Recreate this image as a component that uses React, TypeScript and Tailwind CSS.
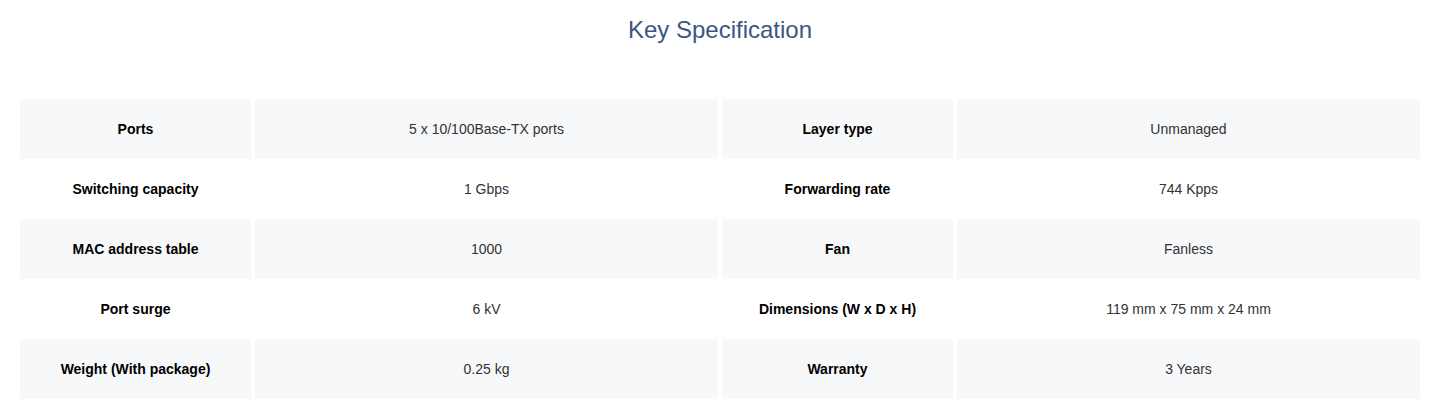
const specs: [string, string, string, string][] = [
	["Ports", "5 x 10/100Base-TX ports", "Layer type", "Unmanaged"],
	["Switching capacity", "1 Gbps", "Forwarding rate", "744 Kpps"],
	["MAC address table", "1000", "Fan", "Fanless"],
	["Port surge", "6 kV", "Dimensions (W x D x H)", "119 mm x 75 mm x 24 mm"],
	["Weight (With package)", "0.25 kg", "Warranty", "3 Years"],
];

export default function App() {
	return (
		<div className="bg-white font-['Liberation_Sans',Arial,sans-serif] pl-5 pr-[19px] pt-4">
			<h2 className="text-center text-[24px] leading-7 text-[#3b5682]">Key Specification</h2>
			<div className="mt-[55px]">
				{specs.map((row, i) => {
					const bg = i % 2 === 0 ? "bg-[#f7f8fa]" : "bg-white";
					return (
						<div
							key={row[0]}
							className="grid h-[60px] grid-cols-[231px_1fr_231px_1fr] gap-x-1 text-[14px]"
						>
							<div className={`flex items-center justify-center font-bold text-black ${bg}`}>
								{row[0]}
							</div>
							<div className={`flex items-center justify-center text-[#333] ${bg}`}>{row[1]}</div>
							<div className={`flex items-center justify-center font-bold text-black ${bg}`}>
								{row[2]}
							</div>
							<div className={`flex items-center justify-center text-[#333] ${bg}`}>{row[3]}</div>
						</div>
					);
				})}
			</div>
		</div>
	);
}
